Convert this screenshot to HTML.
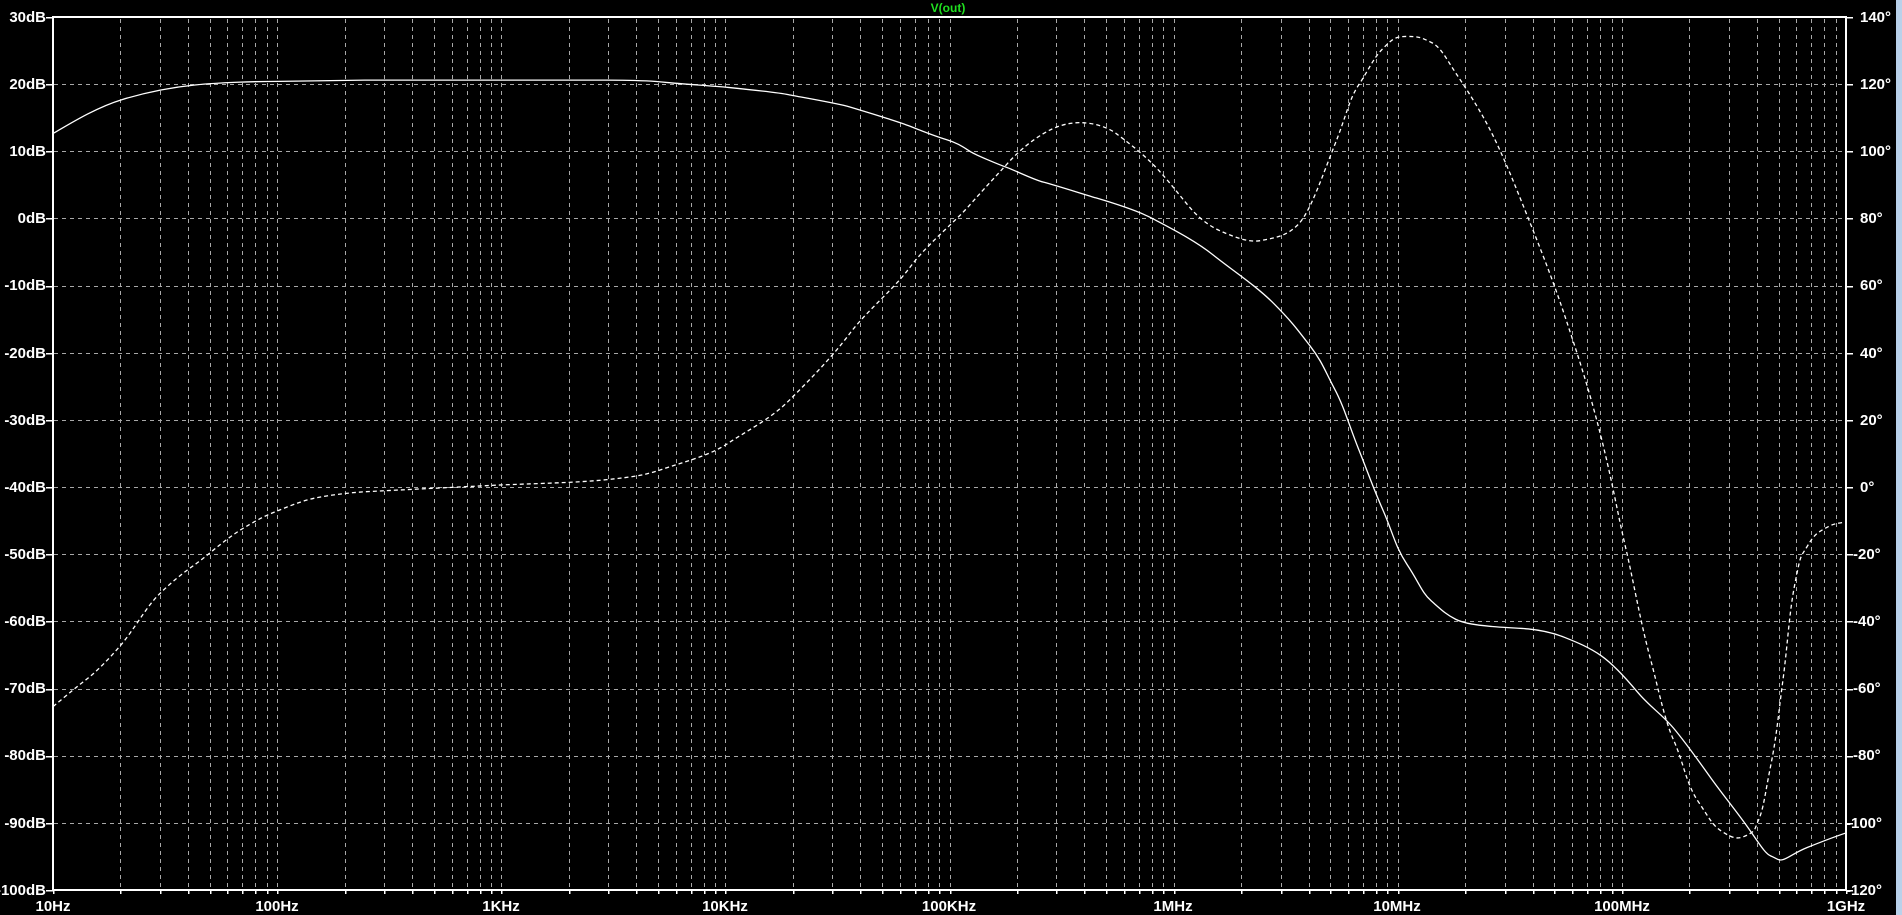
<!DOCTYPE html>
<html><head><meta charset="utf-8"><style>
html,body{margin:0;padding:0;background:#000;width:1902px;height:915px;overflow:hidden}
svg{position:absolute;left:0;top:0}
text{font-family:"Liberation Sans",sans-serif;font-weight:bold;font-size:15px;fill:#fff}
#strip{position:absolute;left:1896px;top:0;width:6px;height:915px;background:#b9d1ea}
</style></head><body>
<svg id="s" width="1902" height="915" viewBox="0 0 1902 915">
<g id="grid" stroke="#a8a8a8" stroke-width="1" stroke-dasharray="4,4" shape-rendering="crispEdges"></g>
<g id="ticks" stroke="#fff" stroke-width="1.5" shape-rendering="crispEdges"></g>
<rect x="53" y="17" width="1793" height="873" fill="none" stroke="#fff" stroke-width="2" shape-rendering="crispEdges"/>
<g transform="translate(53,17) scale(1.2123,1.2142) translate(-43,-14)" fill="none" stroke="#fff" stroke-width="1.3" vector-effect="non-scaling-stroke">
<path vector-effect="non-scaling-stroke" d="M43,110 C60,100 80,88 100,82 S140,72 160,70 S210,67 230,67 L300,66 L500,66 C530,66 540,67 550,68 S590,71 600,72 S640,76 650,78 S690,85 700,88 S740,100 750,104 S770,112 780,115 S795,122 800,125 S822,135 830,138 S852,148 860,150 S890,159 900,162 S935,172 950,180 S985,198 1000,210 S1035,235 1050,250 S1070,272 1080,285 S1092,305 1100,320 S1112,350 1120,370 S1132,402 1140,420 S1150,450 1160,465 S1172,488 1180,495 S1192,506 1200,510 S1220,515 1230,516 S1250,517 1260,518 S1280,521 1290,525 S1310,533 1320,540 S1340,558 1350,570 S1370,588 1380,600 S1400,626 1410,640 S1430,666 1440,680 S1455,703 1460,705 S1466,709 1470,708 S1480,702 1490,698 S1510,690 1522,686"/>
<path vector-effect="non-scaling-stroke" stroke-dasharray="4,3" d="M43,582 C55,572 62,566 70,560 S90,542 100,530 S120,500 130,490 S150,472 160,465 S185,444 200,435 S220,424 230,420 S250,412 260,410 S285,406 300,405 L400,400 C440,398 470,398 500,395 S535,390 550,385 S585,375 600,365 S635,345 650,330 S685,295 700,275 S735,240 750,220 S785,185 800,168 S820,146 830,135 S850,116 860,110 S880,101 890,101 S912,104 920,110 S940,125 950,135 S970,158 980,170 S1000,188 1010,192 S1030,200 1040,198 S1060,195 1070,185 S1090,145 1100,120 S1112,82 1120,70 S1132,48 1140,40 S1150,30 1160,30 S1172,31 1180,35 S1192,48 1200,60 S1220,90 1230,110 S1250,155 1260,180 S1280,230 1290,260 S1310,320 1320,360 S1333,420 1340,450 S1352,510 1360,540 S1372,592 1380,610 S1390,645 1400,660 S1412,680 1420,685 S1432,692 1440,688 S1446,684 1450,675 S1455,655 1460,630 S1466,590 1470,560 S1475,505 1480,480 S1484,460 1490,450 S1498,439 1505,435 S1515,431 1522,430"/>
</g>
<text x="948" y="12" text-anchor="middle" style="fill:#20e020;font-size:12px">V(out)</text>
<g text-anchor="end">
<text x="46" y="22">30dB</text><text x="46" y="89">20dB</text><text x="46" y="156">10dB</text><text x="46" y="223">0dB</text><text x="46" y="290">-10dB</text><text x="46" y="358">-20dB</text><text x="46" y="425">-30dB</text><text x="46" y="492">-40dB</text><text x="46" y="559">-50dB</text><text x="46" y="626">-60dB</text><text x="46" y="693">-70dB</text><text x="46" y="760">-80dB</text><text x="46" y="828">-90dB</text><text x="46" y="895">-100dB</text>
</g>
<g>
<text x="1860" y="22">140°</text><text x="1860" y="89">120°</text><text x="1860" y="156">100°</text><text x="1860" y="223">80°</text><text x="1860" y="290">60°</text><text x="1860" y="358">40°</text><text x="1860" y="425">20°</text><text x="1860" y="492">0°</text><text x="1853" y="559">-20°</text><text x="1853" y="626">-40°</text><text x="1853" y="693">-60°</text><text x="1853" y="760">-80°</text><text x="1846" y="828">-100°</text><text x="1846" y="895">-120°</text>
</g>
<g text-anchor="middle">
<text x="53" y="911">10Hz</text><text x="277" y="911">100Hz</text><text x="501" y="911">1KHz</text><text x="725" y="911">10KHz</text><text x="949" y="911">100KHz</text><text x="1173" y="911">1MHz</text><text x="1397" y="911">10MHz</text><text x="1622" y="911">100MHz</text><text x="1846" y="911">1GHz</text>
</g>
</svg>
<div id="strip"></div>
<script>
(function(){
var ns="http://www.w3.org/2000/svg",g=document.getElementById("grid"),t=document.getElementById("ticks");
function ln(p,x1,y1,x2,y2){var l=document.createElementNS(ns,"line");l.setAttribute("x1",x1);l.setAttribute("y1",y1);l.setAttribute("x2",x2);l.setAttribute("y2",y2);p.appendChild(l);}
var L=53,R=1846,T=17,B=890,D=(R-L)/8;
for(var d=0;d<8;d++){for(var k=1;k<=10;k++){var x=Math.round(L+D*(d+Math.log10(k)))+0.5;if(k>1&&!(d==7&&k==10)){ln(g,x,T+2,x,B-1);}ln(t,x,B,x,B+4);}}
for(var i=0;i<=13;i++){var y=Math.round(T+i*(B-T)/13)+0.5;if(i>0&&i<13)ln(g,L+1,y,R-1,y);ln(t,L-7,y,L,y);ln(t,R,y,R+7,y);}
})();
</script>
</body></html>
